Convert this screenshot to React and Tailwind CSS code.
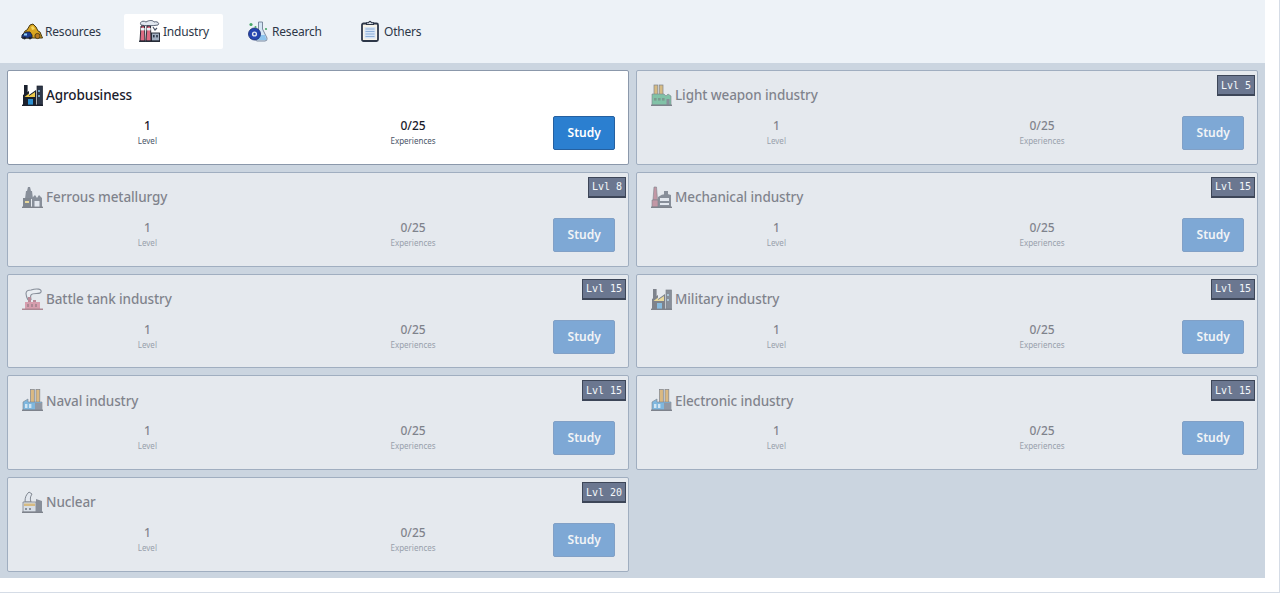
import React from 'react';

const font = { fontFamily: '"Noto Sans", "Open Sans", sans-serif' };

// little flat factory style icons, drawn by hand
const Outline = '#1a202c';

const ResourcesIcon = () => (
  <svg width="22" height="17" viewBox="0 0 22 17" className="shrink-0">
    <path d="M1 14 L4 8 L6 7 L9 2 L12 1 L15 4 L17 8 L19 9 L21.5 15 H1 Z" fill="#d9a520" stroke="#4a3b12" strokeWidth="1" />
    <path d="M10 4 L12 3 L14 6 L11 7 Z" fill="#f6d860" />
    <path d="M1 12 L5 9 L9 9 L11 12 V15 H1 Z" fill="#1f3f8f" stroke={Outline} strokeWidth="0.9" />
    <rect x="3" y="10.5" width="3" height="2" fill="#90cdf4" />
    <circle cx="3.5" cy="15" r="1.4" fill={Outline} />
    <circle cx="9" cy="15" r="1.4" fill={Outline} />
    <circle cx="16.5" cy="13" r="2.6" fill="#b7791f" stroke="#4a3b12" strokeWidth="0.9" />
  </svg>
);

const IndustryIcon = () => (
  <svg width="21" height="22" viewBox="0 0 21 22" className="shrink-0">
    <path d="M2 5 C0 2 4 0 7 2 C10 0 14 0 15 2 C18 1 21 3 19 5 C14 6 6 6 2 5 Z" fill="#e2e8f0" stroke="#4a5568" strokeWidth="0.9" />
    <path d="M2 6 H5.5 L6 21 H1 Z" fill="#dd6b82" stroke={Outline} strokeWidth="0.9" />
    <path d="M8 6 H11.5 L12 21 H7 Z" fill="#dd6b82" stroke={Outline} strokeWidth="0.9" />
    <rect x="1.8" y="8" width="3.8" height="2.4" fill="#edf2f7" />
    <rect x="7.8" y="8" width="3.8" height="2.4" fill="#edf2f7" />
    <path d="M14 7 L16 10 L18 8" fill="none" stroke="#4a5568" strokeWidth="1.2" />
    <rect x="12.5" y="13" width="8" height="8" fill="#a0aec0" stroke={Outline} strokeWidth="0.9" />
    <rect x="14" y="15" width="1.6" height="2.4" fill="#2d3748" />
    <rect x="17.2" y="15" width="1.6" height="2.4" fill="#2d3748" />
    <path d="M0 21.3 H21" stroke={Outline} strokeWidth="1.2" />
  </svg>
);

const ResearchIcon = () => (
  <svg width="20" height="21" viewBox="0 0 20 21" className="shrink-0">
    <path d="M10.5 1 H14.5 V8 L19 17 Q19.5 20 17 20 H9 Q7 20 7.5 17 L10.5 8 Z" fill="#d5e6f5" stroke="#718096" strokeWidth="0.9" />
    <path d="M8.5 14 H17 L18.5 19 H8 Z" fill="#8cc4ee" />
    <circle cx="6.5" cy="13" r="6" fill="#2546b0" stroke="#16296e" strokeWidth="0.8" />
    <circle cx="6.5" cy="13" r="2.6" fill="#e2e8f0" />
    <circle cx="6.5" cy="13" r="1.2" fill="#2546b0" />
    <circle cx="3" cy="3.5" r="1.6" fill="#48a868" />
    <circle cx="7.5" cy="6" r="1" fill="#48a868" />
    <circle cx="18" cy="8" r="1.1" fill="#48a868" />
  </svg>
);

const OthersIcon = () => (
  <svg width="18" height="22" viewBox="0 0 18 22" className="shrink-0">
    <rect x="1" y="3.5" width="16" height="17.5" rx="1.5" fill="#f7f3e8" stroke="#2d3748" strokeWidth="1.8" />
    <path d="M5.5 4.5 V2.8 H7.5 Q9 0 10.5 2.8 H12.5 V4.5 Z" fill="#e2e8f0" stroke="#2d3748" strokeWidth="1.1" />
    <rect x="3.5" y="7" width="11" height="11.5" fill="#d6e4f5" />
    <path d="M4.5 9 H13.5 M4.5 11.5 H13.5 M4.5 14 H13.5 M4.5 16.5 H13.5" stroke="#8fb0d8" strokeWidth="1" />
  </svg>
);

const Ground = () => <path d="M0 21.3 H21" stroke={Outline} strokeWidth="1.4" />;

const icons = {
  // dark plant with yellow saw-tooth roofs and blue doors
  agro: (
    <>
      <rect x="2" y="1" width="3.6" height="11" fill="#1a202c" />
      <rect x="15" y="2" width="5.5" height="19" fill="#2d3748" stroke={Outline} strokeWidth="0.7" />
      <path d="M1 21 V11 L7 7 V11 L14 6 V21 Z" fill="#1a202c" />
      <path d="M2.5 13 L7 9.5 V12 L13 8 V13 Z" fill="#ecc94b" />
      <rect x="6" y="15" width="5" height="6" fill="#2b8fd0" />
      <rect x="16.3" y="6" width="1.4" height="2" fill="#90cdf4" />
      <rect x="16.3" y="11" width="1.4" height="2" fill="#90cdf4" />
      <Ground />
    </>
  ),
  ferrous: (
    <>
      <path d="M6 1 H8 L9 5 H10 L11 13 H3 L4 5 H5 Z" fill="#2d3748" />
      <path d="M1 21 V12 H9 V21 Z" fill="#1f2937" />
      <path d="M10 21 V12 L13 9 L15 12 L17 9 L20 12 V21 Z" fill="#2d3748" />
      <rect x="3" y="15" width="4" height="2" fill="#ecc94b" />
      <rect x="12.5" y="15" width="5" height="6" fill="#e2e8f0" />
      <Ground />
    </>
  ),
  light: (
    <>
      <rect x="3" y="1" width="3.8" height="12" fill="#c98f1a" stroke={Outline} strokeWidth="0.7" />
      <rect x="8.2" y="1" width="3.8" height="12" fill="#c98f1a" stroke={Outline} strokeWidth="0.7" />
      <path d="M1 21 V10 H13 L15 12 L17 10 L20 12 V21 Z" fill="#1f9d63" stroke={Outline} strokeWidth="0.6" />
      <rect x="3" y="14" width="2.6" height="2.6" fill="#134e35" />
      <rect x="7" y="14" width="2.6" height="2.6" fill="#134e35" />
      <rect x="11" y="14" width="2.6" height="2.6" fill="#134e35" />
      <rect x="15.5" y="15" width="3" height="6" fill="#2d3748" />
      <Ground />
    </>
  ),
  mech: (
    <>
      <path d="M3 1 H5.5 L6.5 14 H2 Z" fill="#a0485e" stroke={Outline} strokeWidth="0.6" />
      <path d="M7 21 V11 Q13 6 20 9 V21 Z" fill="#2d3748" />
      <rect x="13" y="5" width="4" height="5" fill="#2d3748" />
      <path d="M1 21 V14 H7 V21 Z" fill="#a0485e" stroke={Outline} strokeWidth="0.6" />
      <rect x="9" y="12" width="9" height="3" fill="#e2e8f0" />
      <rect x="9" y="17" width="9" height="2" fill="#e2e8f0" />
      <Ground />
    </>
  ),
  tank: (
    <>
      <path d="M6 12 C3 6 3 2 9 2 C15 0 20 1 19 4 C18 7 11 4 9 7 C8 9 9 10 9 12" fill="#edf2f7" stroke="#2d3748" strokeWidth="1.1" />
      <path d="M6 9 H9 V15 H6 Z" fill="#8c2f47" />
      <path d="M11 12 H14 V15 H11 Z" fill="#8c2f47" />
      <path d="M3 21 V14 H18 V21 Z" fill="#c9566f" />
      <rect x="5" y="16" width="2" height="3" fill="#742a3c" />
      <rect x="9" y="16" width="2" height="3" fill="#742a3c" />
      <rect x="13" y="16" width="2" height="3" fill="#742a3c" />
      <path d="M0 21.3 H21" stroke="#742a3c" strokeWidth="1.6" />
    </>
  ),
  naval: (
    <>
      <rect x="8.5" y="0.5" width="3.8" height="13" fill="#d08a1a" stroke={Outline} strokeWidth="0.7" />
      <rect x="14" y="0.5" width="3.8" height="13" fill="#d08a1a" stroke={Outline} strokeWidth="0.7" />
      <path d="M1 21 V13 L6 10 V13 L8 13 H20 V21 Z" fill="#1b87d0" stroke={Outline} strokeWidth="0.6" />
      <rect x="3" y="15" width="2.4" height="4" fill="#bee3f8" />
      <rect x="7" y="15" width="2.4" height="4" fill="#bee3f8" />
      <rect x="13" y="14" width="7" height="7" fill="#3f4a5c" />
      <Ground />
    </>
  ),
  nuclear: (
    <>
      <path d="M3 11 C3 6 4 4 7 1 L10 3 C8 6 8 8 9 11 Z" fill="#e2e8f0" stroke="#1f2937" strokeWidth="1" />
      <path d="M1 21 V11 H14 V21 Z" fill="#cbd5e0" stroke={Outline} strokeWidth="0.8" />
      <path d="M2 12.5 H13 V15 H2 Z" fill="#c98f1a" />
      <rect x="3" y="17" width="2" height="2" fill="#2d3748" />
      <rect x="7" y="17" width="2" height="2" fill="#2d3748" />
      <path d="M14 21 V8 L20 10 V21 Z" fill="#2d3748" />
      <Ground />
    </>
  ),
};

const tabs = [
  { name: 'Resources', icon: <ResourcesIcon />, cls: 'w-[107px] pl-[14px] gap-[2px]' },
  { name: 'Industry', icon: <IndustryIcon />, cls: 'w-[99px] pl-[15px] gap-[3px] bg-white' },
  { name: 'Research', icon: <ResearchIcon />, cls: 'w-[104px] pl-[15px] gap-[4px]' },
  { name: 'Others', icon: <OthersIcon />, cls: 'w-[88px] pl-[14px] gap-[5px]' },
];

const cards = [
  { name: 'Agrobusiness', kind: 'agro' },
  { name: 'Light weapon industry', kind: 'light', lvl: 5 },
  { name: 'Ferrous metallurgy', kind: 'ferrous', lvl: 8 },
  { name: 'Mechanical industry', kind: 'mech', lvl: 15 },
  { name: 'Battle tank industry', kind: 'tank', lvl: 15 },
  { name: 'Military industry', kind: 'agro', lvl: 15 },
  { name: 'Naval industry', kind: 'naval', lvl: 15 },
  { name: 'Electronic industry', kind: 'naval', lvl: 15 },
  { name: 'Nuclear', kind: 'nuclear', lvl: 20 },
];

const Card = ({ name, kind, lvl }) => (
  <div className={`relative h-[94.75px] rounded-[2px] border ${lvl ? 'bg-[#e5e9ee] border-[#a0aec0]' : 'bg-white border-[#8b98ab]'}`}>
    <div className={`h-full pl-[14px] pr-[13px] pt-[13px] ${lvl ? 'opacity-50' : ''}`}>
      <div className="flex items-center gap-[3px] h-[22px]">
        <svg width="21" height="22" viewBox="0 0 21 22" className="shrink-0">
          {icons[kind]}
        </svg>
        <span className="relative top-[1px] text-[13.5px] tracking-[-0.1px] font-medium text-[#1a202c] leading-none">{name}</span>
      </div>
      <div className="flex items-start mt-[12px]">
        <div className="w-[252px] text-center text-[#1a202c]">
          <div className="text-[12px] leading-[16px] font-medium">1</div>
          <div className="text-[8px] leading-[14px] text-[#4a5568]">Level</div>
        </div>
        <div className="w-[282px] text-center text-[#1a202c]">
          <div className="text-[12px] leading-[16px] font-medium">0/25</div>
          <div className="text-[8px] leading-[14px] text-[#4a5568]">Experiences</div>
        </div>
        <button className={`ml-auto mt-[-2px] w-[62px] h-[34px] rounded-[2px] border text-white text-[12px] font-semibold ${lvl ? 'bg-[#1969be] border-[#1f5aa0]' : 'bg-[#2b7fd0] border-[#2560a0]'}`}>
          Study
        </button>
      </div>
    </div>
    {lvl && (
      <span
        className="absolute top-[4px] right-[2px] h-[21px] px-[3px] flex items-center bg-[#6b7790] border border-[#3d4658] border-b-2 text-[10px] text-[#f4f7fa]"
        style={{ fontFamily: '"DejaVu Sans Mono", monospace' }}
      >
        {`Lvl ${lvl}`}
      </span>
    )}
  </div>
);

export default function App() {
  return (
    <div className="h-[593px] bg-white border-r border-b border-[#d5dce6] overflow-hidden" style={font}>
      <div className="w-[1265px]">
        <nav className="h-[63px] bg-[#edf2f7] flex items-center gap-[10px] pl-[7px] pb-[1px]">
          {tabs.map((t) => (
            <button
              key={t.name}
              className={`${t.cls} h-[35px] rounded-[2px] flex items-center text-[12px] tracking-[-0.2px] text-[#2d3748]`}
            >
              {t.icon}
              <span className="relative top-[1px]">{t.name}</span>
            </button>
          ))}
        </nav>
        <div className="bg-[#cbd5e0] grid grid-cols-2 gap-x-[7px] gap-y-[7px] px-[7px] pt-[7px] pb-[6px]">
          {cards.map((c) => (
            <Card key={c.name} {...c} />
          ))}
        </div>
      </div>
    </div>
  );
}
